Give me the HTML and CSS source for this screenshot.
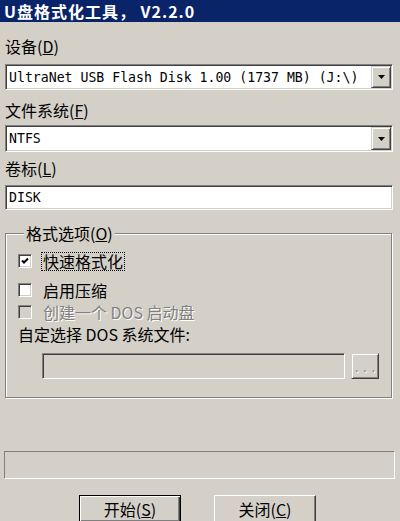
FILE: index.html
```html
<!DOCTYPE html>
<html lang="zh-CN">
<head>
    <meta charset="UTF-8">
    <meta name="viewport" content="width=device-width, initial-scale=1.0">
    <title>U盘格式化工具</title>
    <link rel="stylesheet" href="styles.css">
</head>
<body>
    <div class="title-bar">U盘格式化工具， V2.2.0</div>

    <div class="dialog">
        <div class="field-label label-device">设备(<u>D</u>)</div>
        <div class="combo combo-device">
            <span class="combo-text">UltraNet USB Flash Disk 1.00 (1737 MB) (J:\)</span>
            <span class="combo-button">
                <svg width="7" height="4" viewBox="0 0 7 4"><polygon points="0,0 7,0 3.5,4" fill="#000"/></svg>
            </span>
        </div>

        <div class="field-label label-fs">文件系统(<u>F</u>)</div>
        <div class="combo combo-fs">
            <span class="combo-text">NTFS</span>
            <span class="combo-button">
                <svg width="7" height="4" viewBox="0 0 7 4"><polygon points="0,0 7,0 3.5,4" fill="#000"/></svg>
            </span>
        </div>

        <div class="field-label label-volume">卷标(<u>L</u>)</div>
        <div class="textbox textbox-volume">DISK</div>

        <fieldset class="group">
            <legend>格式选项(<u>O</u>)</legend>

            <div class="check-row row-quick">
                <span class="check-box">
                    <svg width="8" height="8" viewBox="0 0 8 8"><polyline points="1,3.5 3,5.5 7,1.5" fill="none" stroke="#000" stroke-width="2"/></svg>
                </span>
                <span class="check-text focused">快速格式化</span>
            </div>
            <div class="check-row row-compress">
                <span class="check-box"></span>
                <span class="check-text">启用压缩</span>
            </div>
            <div class="check-row row-dos disabled">
                <span class="check-box"></span>
                <span class="check-text">创建一个 DOS 启动盘</span>
            </div>

            <div class="field-label label-sysfile">自定选择 DOS 系统文件:</div>
            <div class="file-row">
                <div class="textbox textbox-file"></div>
                <div class="raised browse-button">...</div>
            </div>
        </fieldset>

        <div class="progress"></div>

        <div class="button-row">
            <div class="button button-default">开始(<u>S</u>)</div>
            <div class="button">关闭(<u>C</u>)</div>
        </div>
    </div>
</body>
</html>
```

FILE: styles.css
```css
body {
    margin: 0;
    width: 400px;
    height: 521px;
    overflow: hidden;
    background-color: #d4d0c8;
    font-family: "Noto Sans CJK SC", sans-serif;
    font-size: 16px;
    color: #000;
}

.title-bar {
    height: 22px;
    line-height: 22px;
    padding-left: 4px;
    background-color: #0a246a;
    color: #fff;
    font-weight: bold;
    font-size: 16px;
    letter-spacing: 1px;
}

.dialog {
    padding: 0 7px 0 5px;
}

.field-label {
    line-height: 18px;
}

.label-device { margin-top: 15px; }
.label-fs { margin-top: 11px; }
.label-volume { margin-top: 7px; }

/* sunken 3d edge */
.combo,
.textbox {
    box-sizing: border-box;
    background-color: #fff;
    border: 1px solid;
    border-color: #808080 #fff #fff #808080;
    box-shadow: inset 1px 1px 0 #404040, inset -1px -1px 0 #d4d0c8;
    padding: 1px;
}

.combo {
    display: flex;
}

.combo-device { height: 26px; margin-top: 9px; }
.combo-fs { height: 27px; margin-top: 6px; }

.combo-text,
.textbox {
    font-family: "DejaVu Sans Mono", monospace;
    font-size: 13.2px;
}

.combo-text {
    flex: 1;
    padding-left: 2px;
    white-space: nowrap;
    overflow: hidden;
    display: flex;
    align-items: center;
}

.combo-button,
.raised {
    box-sizing: border-box;
    background-color: #d4d0c8;
    border: 1px solid;
    border-color: #d4d0c8 #404040 #404040 #d4d0c8;
    box-shadow: inset 1px 1px 0 #fff, inset -1px -1px 0 #808080;
}

.combo-button {
    width: 20px;
    display: flex;
    align-items: center;
    justify-content: center;
}

.textbox-volume {
    height: 25px;
    margin-top: 8px;
    line-height: 21px;
    padding-left: 3px;
}

.group {
    margin: 14px 1px 0 0;
    padding: 9px 10px 18px 12px;
    border: 1px solid #808080;
    box-shadow: inset 1px 1px 0 #fff, 1px 1px 0 #fff;
}

.group legend {
    margin-left: 6px;
    padding: 0 2px;
    line-height: 18px;
    background-color: #d4d0c8;
}

.check-row {
    display: flex;
    align-items: center;
    gap: 9px;
    height: 20px;
}

.row-compress { margin-top: 9px; }
.row-dos { margin-top: 2px; }

.check-box {
    box-sizing: border-box;
    width: 14px;
    height: 14px;
    background-color: #fff;
    border: 1px solid;
    border-color: #808080 #fff #fff #808080;
    box-shadow: inset 1px 1px 0 #404040, inset -1px -1px 0 #d4d0c8;
    display: flex;
    align-items: center;
    justify-content: center;
}

.check-text {
    border: 1px solid transparent;
    padding: 0 1px;
    line-height: 17px;
}

.check-text.focused {
    border: 1px dotted #000;
}

.disabled .check-box {
    background-color: #d4d0c8;
}

.disabled .check-text {
    color: #808080;
    text-shadow: 1px 1px 0 #fff;
}

.label-sysfile {
    margin-top: 3px;
}

.file-row {
    display: flex;
    gap: 6px;
    margin: 10px 0 0 24px;
    height: 26px;
}

.textbox-file {
    width: 303px;
    background-color: #d4d0c8;
}

.browse-button {
    width: 28px;
    display: flex;
    align-items: center;
    justify-content: center;
    font-size: 12px;
    letter-spacing: 5px;
    padding-left: 5px;
    color: #808080;
    text-shadow: 1px 1px 0 #fff;
}

.progress {
    box-sizing: border-box;
    height: 28px;
    margin: 53px -2px 0 -1px;
    border: 1px solid;
    border-color: #808080 #fff #fff #808080;
}

.button-row {
    display: flex;
    gap: 33px;
    margin-top: 16px;
    padding-left: 74px;
}

.button {
    box-sizing: border-box;
    width: 102px;
    height: 28px;
    display: flex;
    align-items: center;
    justify-content: center;
    border: 1px solid;
    border-color: #fff #404040 #404040 #fff;
    box-shadow: inset -1px -1px 0 #808080;
}

.button-default {
    border-color: #000;
    box-shadow: inset 1px 1px 0 #fff, inset -1px -1px 0 #404040, inset -2px -2px 0 #808080;
}
```
